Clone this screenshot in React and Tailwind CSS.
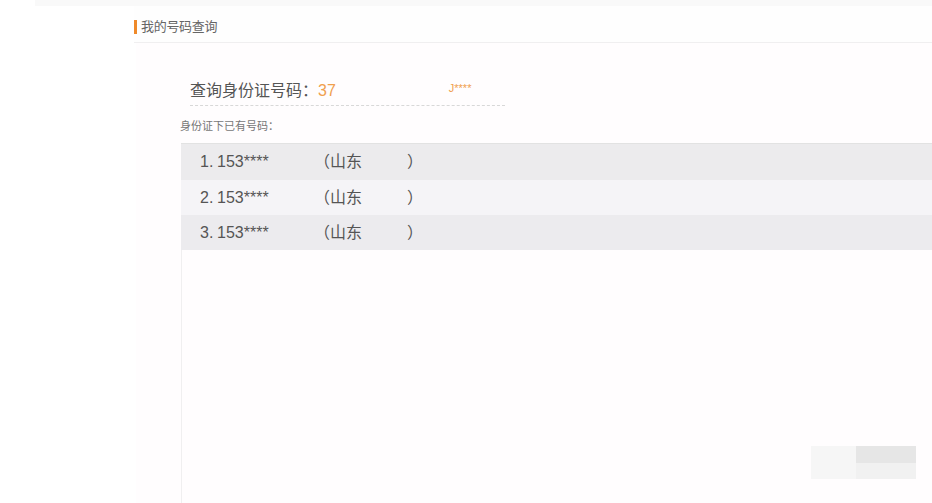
import React from 'react';

const rows = [
  { no: '1.', num: '153****', bg: 'bg-[#ecebed]', h: 'h-[36px]' },
  { no: '2.', num: '153****', bg: 'bg-[#f5f4f7]', h: 'h-[35px]' },
  { no: '3.', num: '153****', bg: 'bg-[#ecebee]', h: 'h-[35px]' },
];

export default function App() {
  return (
    <div className="w-[932px] h-[503px] bg-white overflow-hidden flex flex-col font-['Liberation_Sans','Noto_Sans_CJK_SC',sans-serif]">
      {/* top strip */}
      <div className="h-[6px] ml-[35px] bg-[#f9f9f9] shrink-0" />

      {/* header */}
      <div className="h-[37px] ml-[134px] flex items-center pt-[6px] border-b border-[#f0eff0] bg-[#fefefe] shrink-0">
        <span className="w-[3px] h-[14px] bg-[#ef8a2a] mr-[4px]" />
        <span className="text-[13px] text-[#666] tracking-[-0.3px]">我的号码查询</span>
      </div>

      {/* body */}
      <div className="flex-1 ml-[136px] bg-[#fffdfe] flex flex-col">
        <div className="ml-[54px] mt-[34px] w-[315px] h-[29px] flex items-center border-b border-dashed border-[#d8d8d8]">
          <span className="text-[16px] text-[#555] leading-none">查询身份证号码：</span>
          <span className="text-[16px] text-[#f0a04e] leading-none">37</span>
          <span className="ml-[113px] text-[11px] text-[#f0a04e] leading-none -mt-[6px]">J****</span>
        </div>

        <div className="ml-[44px] mt-[15px] text-[11px] text-[#777] leading-none">身份证下已有号码：</div>

        <div className="ml-[45px] mt-[11px] flex flex-col border-t border-[#e2e2e2]">
          {rows.map((r, i) => (
            <div key={i} className={`${r.h} flex items-center ${r.bg} text-[16px] text-[#555]`}>
              <span className="ml-[19px] w-[15px]">{r.no}</span>
              <span className="w-[97px] ml-[2px]">{r.num}</span>
              <span className="w-[93px]">（山东</span>
              <span>）</span>
            </div>
          ))}
        </div>

        <div className="flex-1 ml-[45px] border-l border-[#f0eff0] relative">
          <div className="absolute left-[629px] top-[196px] flex">
            <div className="w-[45px] h-[33px] bg-[#f6f6f6]" />
            <div className="flex flex-col">
              <div className="w-[60px] h-[17px] bg-[#e6e6e6]" />
              <div className="w-[60px] h-[16px] bg-[#f1f1f1]" />
            </div>
          </div>
        </div>
      </div>
    </div>
  );
}
